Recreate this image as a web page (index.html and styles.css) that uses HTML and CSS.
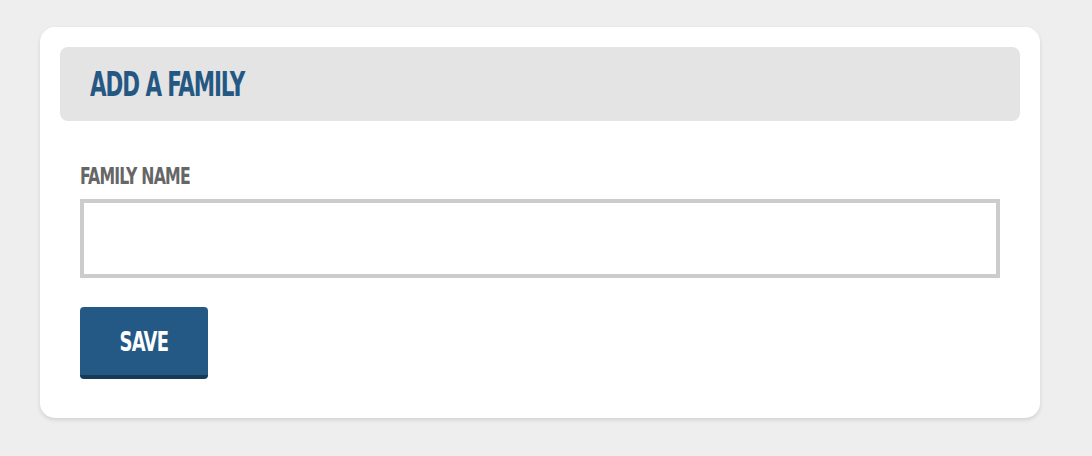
FILE: index.html
```html
<!DOCTYPE html>
<html>
<head>
<meta charset="utf-8">
<link rel="stylesheet" href="styles.css">
</head>
<body>
<div class="card">
  <div class="card-header"><h2 class="title">ADD A FAMILY</h2></div>
  <form class="form">
    <label class="label" for="fname">FAMILY NAME</label>
    <input class="input" id="fname" type="text">
    <button class="btn" type="button"><span class="btn-text">SAVE</span></button>
  </form>
</div>
</body>
</html>
```
FILE: styles.css
```css
html, body { margin: 0; padding: 0; }
body {
  background: #eeeeee;
  width: 1092px;
  height: 456px;
  padding: 27px 0 0 40px;
  box-sizing: border-box;
  font-family: "DejaVu Sans", sans-serif;
  font-stretch: condensed;
}
.card {
  width: 1000px;
  height: 391px;
  box-sizing: border-box;
  background: #fff;
  border-radius: 15px;
  box-shadow: 0 2px 4px rgba(0,0,0,0.12);
  padding: 20px;
}
.card-header {
  height: 74px;
  background: #e4e4e4;
  border-radius: 8px;
  display: flex;
  align-items: center;
  padding-left: 30px;
}
.title {
  margin: 0;
  font-size: 34px;
  font-weight: bold;
  color: #245883;
  letter-spacing: -1.5px;
  transform: scaleX(0.7);
  transform-origin: left center;
}
.form {
  display: flex;
  flex-direction: column;
  align-items: flex-start;
  padding: 0 20px;
}
.label {
  margin-top: 44px;
  font-size: 23px;
  line-height: 22px;
  font-weight: bold;
  color: #666;
  letter-spacing: -1px;
  transform: scaleX(0.76);
  transform-origin: left center;
}
.input {
  margin-top: 12px;
  width: 920px;
  height: 79px;
  box-sizing: border-box;
  border: 4px solid #cccccc;
  border-radius: 0;
  outline: none;
  background: #fff;
}
.btn {
  margin-top: 29px;
  width: 128px;
  height: 72px;
  box-sizing: border-box;
  background: #255985;
  border: none;
  border-bottom: 4px solid #173a56;
  border-radius: 4px;
  color: #fff;
  font-family: "DejaVu Sans", sans-serif;
  font-stretch: condensed;
  font-weight: bold;
  font-size: 27px;
  letter-spacing: -1px;
  padding: 0;
}
.btn-text {
  display: inline-block;
  transform: scaleX(0.74);
}
```
